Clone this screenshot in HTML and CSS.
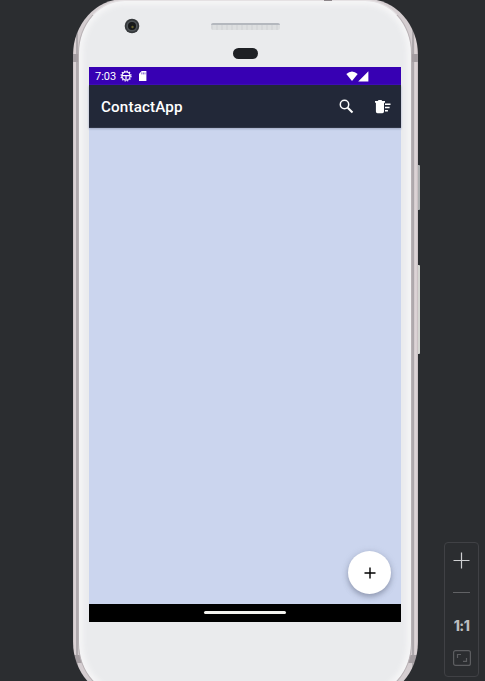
FILE: index.html
```html
<!DOCTYPE html>
<html lang="en">
<head>
<meta charset="utf-8">
<title>ContactApp</title>
<link rel="stylesheet" href="styles.css">
</head>
<body>
<main class="stage">
  <div class="phone">
    <span class="side-key power"></span><span class="side-key volume"></span>
    <span class="antenna"></span>
    <div class="face">
      <svg class="camera" width="16" height="16" viewBox="0 0 16 16">
        <circle cx="8" cy="8" r="7.3" fill="#35383b"/>
        <circle cx="8" cy="8" r="5.6" fill="#505559"/>
        <circle cx="8" cy="8" r="4" fill="#17191b"/>
        <circle cx="8.5" cy="9" r="1.2" fill="#66602c"/>
      </svg>
      <span class="speaker"></span>
      <span class="sensor"></span>
      <div class="screen">
        <div class="status">
          <span class="time">7:03</span>
          <svg class="bug" width="12" height="12" viewBox="0 0 12 12" fill="none" stroke="#fff">
            <circle cx="6" cy="6" r="4.1" stroke-width="1.2"/>
            <circle cx="6" cy="6" r="5" stroke-width="1.2" stroke-dasharray="1.3 1.318"/>
            <path d="M2 5.6h8M6 5.6v4" stroke-width="1.2"/>
          </svg>
          <svg class="card" width="8" height="10" viewBox="0 0 8 10">
            <path d="M2.7 0H7.4V10H0V2.7z" fill="#fff"/>
            <path d="M2.8 1.4v2M4.4 1.4v2M6 1.4v2" stroke="#3700b3" stroke-width=".6"/>
          </svg>
          <svg class="signal" width="24" height="11" viewBox="0 0 24 11" fill="#fff">
            <path d="M.3 3Q6 -2 11.7 3L6 10z"/><path d="M22.4 .2V10.4H12.2z"/>
          </svg>
        </div>
        <header class="appbar">
          <h1>ContactApp</h1>
          <svg class="search" width="15" height="15" viewBox="0 0 15 15" fill="none" stroke="#fff">
            <circle cx="5.5" cy="5.5" r="4.2" stroke-width="1.5"/>
            <path d="M8.7 8.7L13.5 13.5" stroke-width="2"/>
          </svg>
          <svg class="sweep" width="16" height="14" viewBox="0 0 16 14" fill="#fff">
            <path d="M0 1.1h2.7L3.6 0h2.8l.9 1.1H10v1.7H0zM.9 2.6H9V11.6q0 1.6-1.6 1.6H2.5Q.9 13.2.9 11.6zM10 3.4h5.5V5H10zM10 6.7h4.6v1.6H10zM10 10h2.9v1.6H10z"/>
          </svg>
        </header>
        <section class="content">
          <button class="fab" aria-label="Add contact">
            <svg width="12" height="12" viewBox="0 0 12 12"><path d="M6 .5v11M.5 6h11" stroke="#000" stroke-width="1.4"/></svg>
          </button>
        </section>
        <div class="navbar"><span></span></div>
      </div>
    </div>
  </div>
  <aside class="zoom">
    <svg width="17" height="17" viewBox="0 0 17 17"><path d="M8.5 .5v16M.5 8.5h16" stroke="#cfd0d2" stroke-width="1.2"/></svg>
    <span class="minus"></span>
    <span class="ratio">1:1</span>
    <svg width="18" height="16" viewBox="0 0 18 16" fill="none" stroke="#5d5e61">
      <rect x=".6" y=".6" width="16.8" height="14.8" rx="2" stroke-width="1.2"/>
      <path d="M4.5 8V4.5H8M10 11.3h3.5V8" stroke-width="1.2"/>
    </svg>
  </aside>
</main>
</body>
</html>
```
FILE: styles.css
```css
* { box-sizing: border-box; }
body { margin: 0; background: #2b2d30; font-family: Roboto, sans-serif; }
.stage { position: relative; width: 485px; height: 681px; overflow: hidden; background: #2b2d30; }
.phone {
  position: relative;
  width: 345px;
  height: 699px;
  margin: -1px 0 0 73px;
  padding: 1px 6px 2px 5px;
  border-radius: 51px / 56px;
  background:
    linear-gradient(#a49da1, #a49da1) 0 55px / 100% 8px no-repeat,
    linear-gradient(#a49da1, #a49da1) 0 656px / 100% 8px no-repeat,
    linear-gradient(90deg, #c9c0c3 0, #e0d8da 2px, #d5cccf 3px, #89868a 4px, #d4cdd0 5px, #ded9db 50%, #d4cdd0 339px, #89868a 340px, #d1c8cb 341px, #e0d8da 343px, #c4babd 345px);
}
.face {
  height: 696px;
  padding: 0 10px;
  border: 1px solid #b8b1b4;
  border-top-color: #e5e1e3;
  border-radius: 47px / 53px;
  background: #eaebed;
  box-shadow: inset 0 0 5px 4px #f5f5f6;
  display: grid;
  grid-template-columns: 122px 68px 122px;
  grid-template-rows: 46px 20px 555px;
}
.camera { margin: 17px 0 0 35px; }
.speaker { align-self: start; width: 69px; height: 7px; margin-top: 22px; border-radius: 2px; border-top: 2px solid #b4b8be; background: repeating-linear-gradient(90deg, #d6d8da 0 2px, #dddfe0 2px 5px); }
.sensor { grid-column: 2; grid-row: 2; justify-self: center; width: 25px; height: 11px; margin-top: 1px; border-radius: 6px; background: #1e2024; }
.screen { grid-column: 1 / 4; grid-row: 3; width: 312px; display: flex; flex-direction: column; }
.status { height: 18px; padding-left: 6px; display: flex; align-items: center; background: #3700b3; color: #fff; }
.time { width: 25px; padding-top: 1px; font-size: 11px; line-height: 18px; }
.card { margin-left: 7px; }
.signal { margin-left: auto; margin-right: 31px; }
.appbar { height: 43px; padding: 1px 10px 0 12px; display: flex; align-items: center; background: #222838; border-bottom: 1px solid #303646; color: #fff; z-index: 1; box-shadow: 0 1px 2px #a0a9c4; }
h1 { margin: 0 auto 0 0; padding-top: 1px; font-size: 15.2px; line-height: 20px; font-weight: 500; letter-spacing: .15px; }
.search { margin-right: 21px; }
.content { height: 476px; padding: 0 10px 10px 0; display: flex; align-items: flex-end; justify-content: flex-end; background: #cbd5ee; }
.fab { width: 43px; height: 43px; padding: 0; border: 0; border-radius: 50%; display: flex; align-items: center; justify-content: center; background: #fff; box-shadow: 0 3px 5px #6f789080, 0 1px 7px #808aa050; }
.navbar { height: 18px; padding-top: 7px; display: flex; justify-content: center; background: #000; }
.navbar span { width: 82px; height: 3px; border-radius: 2px; background: #f3f3ef; }
.side-key { position: absolute; left: 345px; width: 2px; border-radius: 0 1px 1px 0; background: #adafb0; }
.power { top: 166px; height: 45px; }
.volume { top: 266px; height: 89px; background: #d3d4d0; }
.antenna { position: absolute; left: 251px; top: 1px; width: 8px; height: 1px; z-index: 2; background: #8d868a; }
.zoom { position: absolute; left: 444px; top: 542px; width: 35px; height: 135px; padding-top: 9px; border: 1px solid #404145; border-radius: 4px; display: flex; flex-direction: column; align-items: center; }
.minus { width: 17px; height: 1px; margin: 23px 0 24px; background: #616265; }
.ratio { height: 18px; margin-bottom: 15px; font: 800 14px/18px Inter, sans-serif; letter-spacing: -.6px; color: #bcbdbf; }
```
